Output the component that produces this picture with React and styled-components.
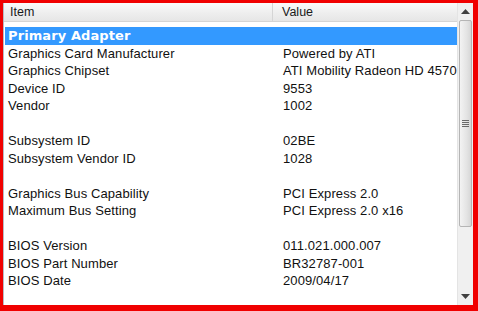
import React from "react";
import styled, { createGlobalStyle } from "styled-components";

const Global = createGlobalStyle`
  html, body { margin: 0; padding: 0; background: #fff; }
  body { font-family: "Liberation Sans", Arial, sans-serif; }
`;

const Frame = styled.div`
  width: 478px;
  height: 311px;
  box-sizing: border-box;
  border-style: solid;
  border-color: #f00000;
  border-width: 3px 5px 6px 3px;
  display: flex;
  background: #fff;
  overflow: hidden;
`;

const ListArea = styled.div`
  flex: 1;
  display: flex;
  flex-direction: column;
  min-width: 0;
  border-left: 1px solid #b8bcc4;
  overflow: hidden;
`;

const Header = styled.div`
  display: grid;
  grid-template-columns: 269px 1fr;
  height: 19px;
  flex-shrink: 0;
  background: linear-gradient(#fafafa, #eeeeee 55%, #e6e6e6);
  border-bottom: 1px solid #d5d5d5;
  box-sizing: border-box;
`;

const HeaderCell = styled.div`
  font-size: 12.5px;
  color: #1a1a1a;
  padding-left: ${(p) => p.$pad}px;
  display: flex;
  align-items: center;
  border-right: ${(p) => (p.$sep ? "1px solid #d5d5d5" : "none")};
`;

const Rows = styled.div`
  padding-top: 5px;
  display: flex;
  flex-direction: column;
`;

const Row = styled.div`
  display: grid;
  grid-template-columns: 275px 1fr;
  height: 17.5px;
  align-items: center;
  font-size: 13px;
  letter-spacing: 0.1px;
  white-space: nowrap;
  overflow: hidden;
  margin-left: 1px;
  background: ${(p) => (p.$selected ? "#3399ff" : "transparent")};
  color: ${(p) => (p.$selected ? "#fff" : "#111")};
  font-weight: ${(p) => (p.$selected ? 700 : 400)};
  font-family: ${(p) =>
    p.$selected ? '"DejaVu Sans", Verdana, sans-serif' : '"Liberation Sans", Arial, sans-serif'};
`;

const Cell = styled.span`
  padding-left: 3px;
  overflow: hidden;
`;

const Scrollbar = styled.div`
  width: 16px;
  flex-shrink: 0;
  display: flex;
  flex-direction: column;
  background: #f0f0f0;
  border-left: 1px solid #e4e4e4;
  box-sizing: border-box;
`;

const Arrow = styled.div`
  height: 17px;
  display: flex;
  align-items: center;
  justify-content: center;
  flex-shrink: 0;
`;

const Thumb = styled.div`
  height: 207px;
  margin: 0 1px;
  border: 1px solid #b5b5b5;
  border-radius: 2px;
  background: linear-gradient(to right, #f3f3f3, #e4e4e4 60%, #d6d6d6);
  display: flex;
  align-items: center;
  justify-content: center;
  box-sizing: border-box;
`;

const Track = styled.div`
  flex: 1;
`;

const Grip = () => (
  <svg width="7" height="8" viewBox="0 0 7 8">
    {[0, 2, 4, 6].map((y) => (
      <rect key={y} x="0" y={y} width="7" height="1" fill="#6a6a6a" />
    ))}
  </svg>
);

const Tri = ({ up }) => (
  <svg width="9" height="5" viewBox="0 0 9 5">
    <polygon points={up ? "4.5,0 9,5 0,5" : "0,0 9,0 4.5,5"} fill="#404040" />
  </svg>
);

const data = [
  ["Primary Adapter", "", true],
  ["Graphics Card Manufacturer", "Powered by ATI"],
  ["Graphics Chipset", "ATI Mobility Radeon HD 4570"],
  ["Device ID", "9553"],
  ["Vendor", "1002"],
  ["", ""],
  ["Subsystem ID", "02BE"],
  ["Subsystem Vendor ID", "1028"],
  ["", ""],
  ["Graphics Bus Capability", "PCI Express 2.0"],
  ["Maximum Bus Setting", "PCI Express 2.0 x16"],
  ["", ""],
  ["BIOS Version", "011.021.000.007"],
  ["BIOS Part Number", "BR32787-001"],
  ["BIOS Date", "2009/04/17"],
];

export default function App() {
  return (
    <>
      <Global />
      <Frame>
        <ListArea>
          <Header>
            <HeaderCell $pad={6} $sep>Item</HeaderCell>
            <HeaderCell $pad={9}>Value</HeaderCell>
          </Header>
          <Rows>
            {data.map(([k, v, sel], i) => (
              <Row key={i} $selected={sel}>
                <Cell>{k}</Cell>
                <Cell>{v}</Cell>
              </Row>
            ))}
          </Rows>
        </ListArea>
        <Scrollbar>
          <Arrow><Tri up /></Arrow>
          <Thumb><Grip /></Thumb>
          <Track />
          <Arrow><Tri /></Arrow>
        </Scrollbar>
      </Frame>
    </>
  );
}
